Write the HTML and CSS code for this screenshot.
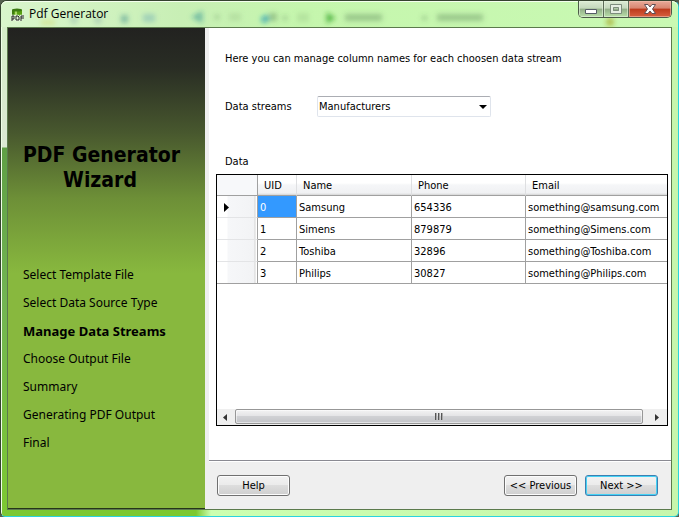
FILE: index.html
```html
<!DOCTYPE html>
<html lang="en">
<head>
<meta charset="utf-8">
<title>Pdf Generator</title>
<link rel="stylesheet" href="styles.css">
</head>
<body>
<div class="window">
  <header class="titlebar">
    <svg class="app-icon" viewBox="0 0 14 14" width="14" height="14" aria-hidden="true">
      <path d="M1 2v6h10V2z" fill="#58a012"/>
      <path d="M1 2v6h2V2z" fill="#3f7c10"/>
      <path d="M4 3v5h2V3z" fill="#a5d860"/>
      <ellipse cx="6" cy="2" rx="5" ry="1.5" fill="#3c7a12"/>
      <path d="M1 13V8h2v3H1M5 8h2l1 1v3H5zM10 13V8h3M10 10h3" fill="none" stroke="#e4f5da" stroke-width="2.4"/>
      <path d="M1 13V8h2v3H1M5 8h2l1 1v3H5zM10 13V8h3M10 10h3" fill="none" stroke="#222"/>
    </svg>
    <h1 class="caption">Pdf Generator</h1>
    <svg class="backdrop" viewBox="0 0 679 27" width="679" height="27" aria-hidden="true">
      <defs><filter id="soft" x="-5%" y="-50%" width="110%" height="200%"><feGaussianBlur stdDeviation="2.5"/></filter></defs>
      <g filter="url(#soft)">
        <path d="M40 19h14v5H40z" fill="#cfcf55" opacity=".4"/>
        <circle cx="73" cy="19" r="4" fill="#6b91a0" opacity=".3"/>
        <circle cx="97" cy="19" r="4" fill="#6b91a0" opacity=".3"/>
        <path d="M120 14h7v8h-7z" fill="#3d8c8c" opacity=".5"/>
        <path d="M142 13h12v8h-12z" fill="#62a2b4" opacity=".4"/>
        <path d="M193 16l7-4v8z" fill="#268c91" stroke="#268c91" stroke-width="3" opacity=".5"/>
        <circle cx="216" cy="16" r="2" fill="#4d7d4d" opacity=".5"/>
        <path d="M228 12h12v8h-12z" fill="#739c6b" opacity=".2"/>
        <path d="M261 20l6-4" stroke="#1593b4" stroke-width="6" opacity=".7"/>
        <path d="M268 12h8v8h-8z" fill="#456f45" opacity=".35"/>
        <circle cx="284" cy="17" r="2" fill="#456f45" opacity=".5"/>
        <path d="M296 12h12v9h-12z" fill="#739c6b" opacity=".2"/>
        <path d="M326 12l8 5-8 5z" fill="#279c20" stroke="#279c20" opacity=".7"/>
        <path d="M344 13h37v7h-37zM421 15h5v4h-5zM436 13h46v7h-46z" fill="#497349" opacity=".35"/>
        <circle cx="609" cy="21" r="4" fill="#a4a320" opacity=".7"/>
      </g>
    </svg>
    <div class="window-controls">
      <button type="button" class="wc minimize" aria-label="Minimize">
        <svg viewBox="0 0 14 12" width="14" height="12"><path d="M1.500 6.500h11v4h-11z" fill="#fff" stroke="#555d66"/></svg>
      </button>
      <button type="button" class="wc maximize" aria-label="Maximize" disabled>
        <svg viewBox="0 0 14 12" width="14" height="12"><path d="M3 3h8v6H3z" fill="none" stroke="#e6efe3" stroke-width="2"/><path d="M1.500 1.500h11v9h-11zM4.500 4.500h5v3h-5z" fill="none" stroke="#7d8d7d"/></svg>
      </button>
      <button type="button" class="wc close" aria-label="Close">
        <svg viewBox="0 0 14 12" width="14" height="12"><path d="M1.500 1.500H5l2 2.500 2-2.500h3.500L9.500 6l3 4.500H9L7 8l-2 2.500H1.500l3-4.500z" fill="#fff" stroke="#604f55"/></svg>
      </button>
    </div>
  </header>

  <div class="client">
    <nav class="sidebar" aria-label="Wizard steps">
      <h2 class="brand">PDF Generator<br>Wizard</h2>
      <ol class="steps">
        <li>Select Template File</li>
        <li>Select Data Source Type</li>
        <li class="current" aria-current="step">Manage Data Streams</li>
        <li>Choose Output File</li>
        <li>Summary</li>
        <li>Generating PDF Output</li>
        <li>Final</li>
      </ol>
    </nav>

    <main class="panel">
      <section class="page">
        <p class="intro">Here you can manage column names for each choosen data stream</p>
        <div class="field">
          <label for="streams">Data streams</label>
          <div class="combo">
            <select id="streams"><option>Manufacturers</option></select>
          </div>
        </div>
        <h3 class="data-label" id="data-label">Data</h3>
        <div class="grid">
          <div class="viewport">
            <table aria-labelledby="data-label">
              <colgroup><col class="c-row"><col class="c-uid"><col class="c-name"><col class="c-phone"><col></colgroup>
              <thead>
                <tr><td class="corner"></td><th>UID</th><th>Name</th><th>Phone</th><th>Email</th></tr>
              </thead>
              <tbody>
                <tr><td class="rowhead"><svg viewBox="0 0 5 9" width="5" height="9" aria-hidden="true"><path d="M0 0l5 4.500L0 9z"/></svg></td><td class="selected">0</td><td>Samsung</td><td>654336</td><td>something@samsung.com</td></tr>
                <tr><td class="rowhead"></td><td>1</td><td>Simens</td><td>879879</td><td>something@Simens.com</td></tr>
                <tr><td class="rowhead"></td><td>2</td><td>Toshiba</td><td>32896</td><td>something@Toshiba.com</td></tr>
                <tr><td class="rowhead"></td><td>3</td><td>Philips</td><td>30827</td><td>something@Philips.com</td></tr>
              </tbody>
            </table>
          </div>
          <div class="scrollbar">
            <button type="button" class="arrow" aria-label="Scroll left"><svg viewBox="0 0 4 7" width="4" height="7"><path d="M4 0v7L0 3.500z"/></svg></button>
            <div class="track"><div class="thumb"><i></i><i></i><i></i></div></div>
            <button type="button" class="arrow" aria-label="Scroll right"><svg viewBox="0 0 4 7" width="4" height="7"><path d="M0 0v7l4-3.500z"/></svg></button>
          </div>
        </div>
      </section>
      <footer class="actions">
        <button type="button" class="btn">Help</button>
        <div class="step-buttons">
          <button type="button" class="btn">&lt;&lt; Previous</button>
          <button type="button" class="btn default">Next &gt;&gt;</button>
        </div>
      </footer>
    </main>
  </div>
</div>
</body>
</html>
```
FILE: styles.css
```css
* { box-sizing: border-box; }

html, body { height: 100%; }

body {
  margin: 0;
  background: #55604f;
  color: #000;
  font: 11px/14px "DejaVu Sans Condensed", "Noto Sans", sans-serif;
}

button, select { font: inherit; color: inherit; }

h1, h2, h3, p, ol { margin: 0; padding: 0; font: inherit; }

.window {
  position: relative;
  display: flex;
  flex-direction: column;
  height: 100vh;
  padding: 0 6px 6px;
  border: 1px solid #35432f;
  border-right-color: #2bd3dd;
  border-bottom-color: #2bd3dd;
  border-radius: 7px 7px 5px 5px;
  background:
    linear-gradient(#d3efc5 0, #dbe8d3 146px, #5f9f45 147px, #72b552 300px, #7cc832 100%) 0 0 / 6px calc(100% - 6px) no-repeat,
    linear-gradient(90deg, #7cc832 0, #7cc82f 195px, #ccffb0 210px, #c6f6ac 100%);
  box-shadow: inset 1px 1px #efffe8;
}

.titlebar {
  display: flex;
  align-items: flex-start;
  height: 26px;
  margin: 0 -6px;
  padding: 0 6px 0 10px;
  border-radius: 6px 6px 0 0;
  background: linear-gradient(90deg, #d9f6cc 0, #c8efb5 180px, #c5f6ad 300px, #c9f9b3 100%);
  box-shadow: inset 0 1px #f4ffee;
  flex: none;
}

.app-icon { margin-top: 7px; overflow: visible; position: relative; z-index: 1; }

.caption {
  position: relative;
  z-index: 1;
  flex: 1;
  margin: 5px 0 0 4px;
  font: 12px/16px "Open Sans", sans-serif;
}

.backdrop { position: absolute; left: 0; top: 0; pointer-events: none; }

.window-controls {
  position: relative;
  z-index: 1;
  display: flex;
  height: 17px;
  border: 1px solid #4c5a48;
  border-top: 0;
  border-radius: 0 0 5px 5px;
  overflow: hidden;
}

.wc {
  display: flex;
  align-items: center;
  justify-content: center;
  width: 25px;
  padding: 0;
  border: 0;
  border-right: 1px solid #5c6b57;
  background: linear-gradient(#dcebd5 0, #c4d8bc 45%, #92ae88 50%, #b9dfa8 100%);
  box-shadow: inset 0 0 0 1px #e4f4dd99;
}

.close {
  width: 42px;
  border-right: 0;
  background: linear-gradient(#e9aa99 0, #d98570 45%, #bd3a1c 50%, #d7603f 100%);
  box-shadow: inset 0 0 0 1px #f4c0b099;
}

.client {
  display: flex;
  flex: 1;
  min-height: 0;
  border: 1px solid #5b7a4c;
  background: #efefef;
}

.sidebar {
  width: 197px;
  flex: none;
  padding: 115px 15px 0;
  background: linear-gradient(#222220 0, #292d24 40px, #48582e 105px, #6d8f37 170px, #88b83e 245px);
  border-bottom: 1px solid #26351a;
}

.brand {
  margin-right: 13px;
  text-align: center;
  font-size: 21px;
  font-weight: bold;
  line-height: 25px;
  white-space: nowrap;
}

.steps {
  margin-top: 68px;
  list-style: none;
  font-family: "Noto Sans", sans-serif;
  font-size: 12px;
  line-height: 28px;
  white-space: nowrap;
}

.current { font-size: 13px; font-weight: bold; }

.panel {
  display: flex;
  flex-direction: column;
  flex: 1;
  min-width: 0;
  margin-left: 4px;
}

.page {
  display: flex;
  flex-direction: column;
  flex: 1;
  min-height: 0;
  padding: 24px 3px 34px 7px;
  background: #fff;
}

.intro { margin-left: 9px; }

.field { display: flex; align-items: center; margin: 30px 0 0 9px; }

.field label { width: 92px; }

.combo { position: relative; }

.combo::after {
  content: "";
  position: absolute;
  right: 4px;
  top: 9px;
  border: 4px solid transparent;
  border-top-color: #000;
  border-bottom: 0;
  pointer-events: none;
}

.combo select {
  appearance: none;
  display: block;
  width: 174px;
  height: 21px;
  padding: 0 20px 0 1px;
  border: 1px solid #dfe4ec;
  border-top-color: #abadb3;
  border-radius: 2px;
  background: #fff;
}

.data-label { margin: 38px 0 5px 9px; }

.grid {
  display: flex;
  flex-direction: column;
  flex: 1;
  min-height: 0;
  border: 1px solid #000;
}

.viewport { flex: 1; min-height: 0; overflow: hidden; }

table { width: 100%; table-layout: fixed; border-collapse: separate; border-spacing: 0; }

.c-row { width: 41px; }
.c-uid { width: 39px; }
.c-name { width: 115px; }
.c-phone { width: 114px; }

th, td {
  height: 22px;
  padding: 2px 2px 0;
  border: solid #a0a0a0;
  border-width: 0 1px 1px 0;
  text-align: left;
  white-space: nowrap;
}

th:last-child, td:last-child { border-right: 0; }

th, .corner { height: 21px; }

th {
  padding-left: 6px;
  border-right-color: #dedfe1;
  background: linear-gradient(#fff 0, #fff 40%, #f5f6f8 50%, #f0f1f3 90%, #d5d5d5 100%);
  font-weight: normal;
}

.corner { background: #f7f8fa; }

.rowhead {
  padding-left: 7px;
  border-bottom-color: #e3e4e6;
  background: linear-gradient(90deg, #fff 0, #fff 10px, #f6f7f9 11px, #f2f3f5 37px, #d5d5d5 38px, #fff 39px);
}

.rowhead svg { display: block; }

tr:last-child .rowhead { border-bottom-color: #a0a0a0; }

.selected { background: #3399ff; color: #fff; }

.scrollbar { display: flex; height: 16px; flex: none; background: #efefef; }

.arrow {
  display: flex;
  align-items: center;
  justify-content: center;
  width: 18px;
  padding: 0 2px 0 0;
  border: 0;
  background: none;
  fill: #333;
}

.track { flex: 1; padding-right: 6px; }

.thumb {
  display: flex;
  align-items: center;
  justify-content: center;
  gap: 1px;
  height: 15px;
  border: 1px solid #979797;
  border-radius: 2px;
  background: linear-gradient(#f3f3f3 0, #e4e4e6 45%, #d0d1d4 50%, #c3c4c8 100%);
  box-shadow: inset 0 0 0 1px #ffffff88;
}

.thumb i { width: 2px; height: 7px; background: linear-gradient(90deg, #555 50%, #aaa 50%); }

.actions {
  display: flex;
  justify-content: space-between;
  flex: none;
  height: 49px;
  padding: 14px 13px 0 8px;
  border-top: 1px solid #8a8a92;
  box-shadow: inset 0 1px #fff;
}

.step-buttons { display: flex; gap: 8px; }

.btn {
  width: 73px;
  height: 21px;
  padding: 0 2px;
  border: 1px solid #707070;
  border-radius: 3px;
  background: linear-gradient(#f2f2f2 0, #ebebeb 48%, #dddddd 50%, #cfcfcf 100%);
  box-shadow: inset 0 0 0 1px #fcfcfc;
  white-space: nowrap;
}

.btn.default { border-color: #3c7fb1; box-shadow: inset 0 0 0 1px #45d2f5; }
```
